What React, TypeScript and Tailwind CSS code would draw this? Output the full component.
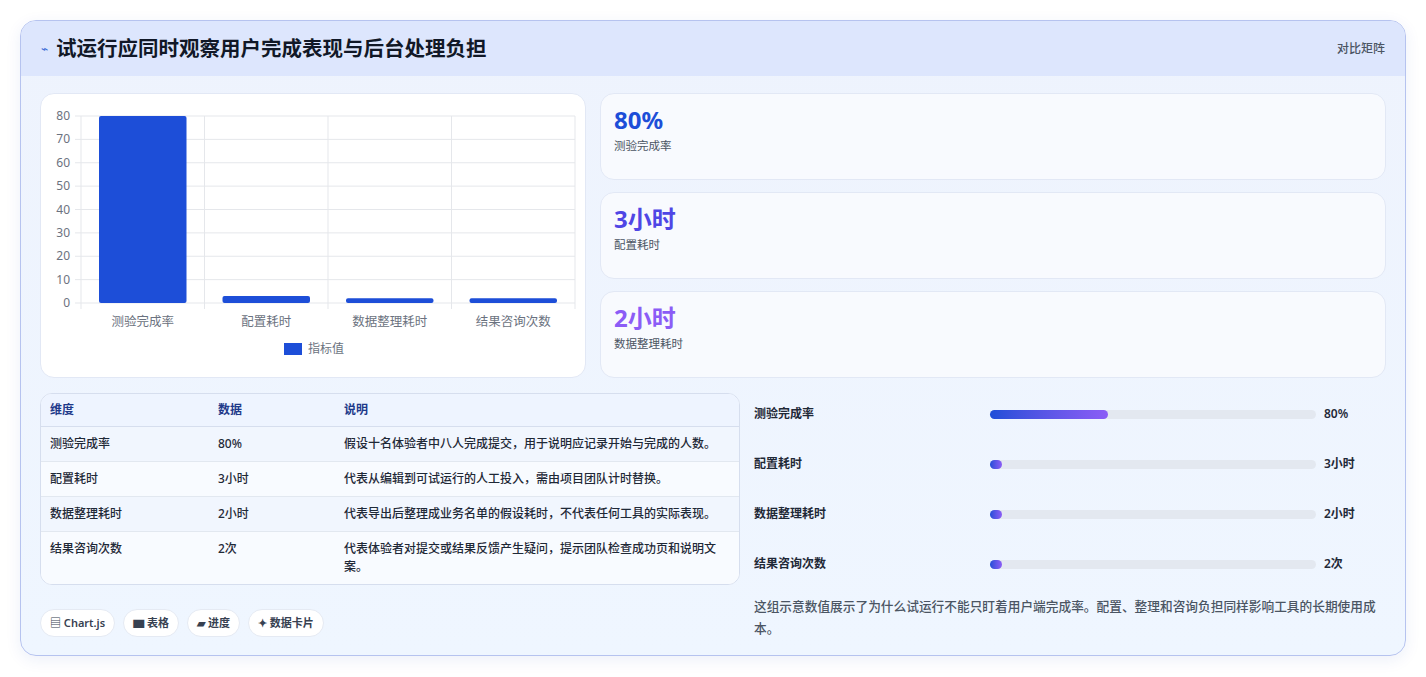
import React from "react";

const font = { fontFamily: '"Noto Sans", "Noto Sans CJK SC", sans-serif' };

function Chart() {
  const x0 = 40, x1 = 534, yTop = 22, yBot = 209;
  const h = (v: number) => ((yBot - yTop) * v) / 80;
  const cats = ["测验完成率", "配置耗时", "数据整理耗时", "结果咨询次数"];
  const vals = [80, 3, 2, 2];
  const cw = (x1 - x0) / 4;
  return (
    <svg width="545" height="284" viewBox="0 0 545 284" style={{ fontFamily: '"Noto Sans","Noto Sans CJK SC",sans-serif' }}>
      {[0, 10, 20, 30, 40, 50, 60, 70, 80].map((v) => {
        const y = yBot - h(v);
        return (
          <g key={v}>
            <line x1={x0 - 6} x2={x1} y1={y} y2={y} stroke="#e5e7eb" />
            <text x={29} y={y + 4} fontSize="12" fill="#6b7280" textAnchor="end">{v}</text>
          </g>
        );
      })}
      {[0, 1, 2, 3, 4].map((i) => (
        <line key={i} x1={x0 + cw * i} x2={x0 + cw * i} y1={yTop} y2={yBot + 6} stroke="#e5e7eb" />
      ))}
      {vals.map((v, i) => (
        <rect key={i} x={x0 + cw * i + 18} y={yBot - h(v)} width={cw - 36} height={h(v)} fill="#1d4ed8" rx="2" />
      ))}
      {cats.map((c, i) => (
        <text key={c} x={x0 + cw * i + cw / 2} y={232} fontSize="12.5" fill="#6b7280" textAnchor="middle">{c}</text>
      ))}
      <rect x={243} y={249} width={18} height={12} fill="#1d4ed8" />
      <text x={267} y={259} fontSize="12" fill="#6b7280">指标值</text>
    </svg>
  );
}

const stats = [
  { v: "80%", l: "测验完成率", c: "text-[#1d4ed8]" },
  { v: "3小时", l: "配置耗时", c: "text-[#4f46e5]" },
  { v: "2小时", l: "数据整理耗时", c: "text-[#8b5cf6]" },
];

const rows = [
  ["测验完成率", "80%", "假设十名体验者中八人完成提交，用于说明应记录开始与完成的人数。"],
  ["配置耗时", "3小时", "代表从编辑到可试运行的人工投入，需由项目团队计时替换。"],
  ["数据整理耗时", "2小时", "代表导出后整理成业务名单的假设耗时，不代表任何工具的实际表现。"],
  ["结果咨询次数", "2次", "代表体验者对提交或结果反馈产生疑问，提示团队检查成功页和说明文案。"],
];

const prog = [
  ["测验完成率", "80%", 118],
  ["配置耗时", "3小时", 12],
  ["数据整理耗时", "2小时", 12],
  ["结果咨询次数", "2次", 12],
] as const;

export default function App() {
  return (
    <div className="w-[1426px] h-[677px] bg-white pt-[20px] px-[20px]" style={font}>
      <div className="w-[1386px] h-[636px] rounded-[16px] border border-[#b6c3ef] overflow-hidden bg-gradient-to-b from-[#eef3fd] to-[#eff6ff] shadow-[0_4px_16px_rgba(30,64,175,0.08)]">
        <div className="h-[55px] bg-[#dde6fd] flex items-center justify-between px-[20px]">
          <div className="flex items-center gap-[8px]">
            <span className="text-[#3b6bd6] text-[12px]">⌁</span>
            <span className="text-[20.5px] font-bold text-[#111827]">试运行应同时观察用户完成表现与后台处理负担</span>
          </div>
          <span className="text-[12px] text-[#4b5563] font-medium">对比矩阵</span>
        </div>
        <div className="px-[19px] pt-[17px]">
          <div className="flex gap-[14px]">
            <div className="w-[546px] h-[285px] bg-white rounded-[14px] border border-[#e2e8f5]">
              <Chart />
            </div>
            <div className="flex-1 flex flex-col gap-[12px]">
              {stats.map((s) => (
                <div key={s.l} className="h-[87px] rounded-[14px] border border-[#e2e8f5] bg-[#f8fafe] px-[13px] pt-[10px]">
                  <div className={`text-[24px] font-bold leading-[32px] ${s.c}`}>{s.v}</div>
                  <div className="text-[11.5px] text-[#4b5563] mt-[1px]">{s.l}</div>
                </div>
              ))}
            </div>
          </div>
          <div className="flex gap-[14px] mt-[15px]">
            <div className="w-[700px]">
              <div className="rounded-[12px] border border-[#d6deee] overflow-hidden bg-white">
                <div className="flex h-[33px] items-center bg-[#eef4ff] border-b border-[#d6deee] text-[12px] font-semibold text-[#1e3a8a]">
                  <div className="w-[177px] pl-[9px]">维度</div>
                  <div className="w-[126px]">数据</div>
                  <div className="flex-1">说明</div>
                </div>
                {rows.map((r, i) => (
                  <div key={r[0]} className={`flex py-[8px] text-[12px] font-medium text-[#1f2937] leading-[18px] ${i % 2 ? "bg-[#f8fbff]" : "bg-[#f1f6fe]"} ${i < 3 ? "border-b border-[#e2e8f0]" : ""}`}>
                    <div className="w-[177px] pl-[9px]">{r[0]}</div>
                    <div className="w-[126px]">{r[1]}</div>
                    <div className="flex-1 pr-[16px]">{r[2]}</div>
                  </div>
                ))}
              </div>
              <div className="flex gap-[8px] mt-[24px]">
                {["▤ Chart.js", "▆ 表格", "▰ 进度", "✦ 数据卡片"].map((t) => (
                  <span key={t} className="h-[28px] px-[9px] rounded-full bg-white border border-[#e5eaf3] text-[11px] font-semibold text-[#374151] flex items-center">{t}</span>
                ))}
              </div>
            </div>
            <div className="flex-1 -mt-[4px]">
              {prog.map(([l, v, w]) => (
                <div key={l} className="h-[50px] flex items-center text-[12px] font-semibold text-[#1f2937]">
                  <div className="w-[236px]">{l}</div>
                  <div className="w-[326px] h-[9px] rounded-full bg-[#e3e8f0]">
                    <div className="h-[9px] rounded-full bg-gradient-to-r from-[#1d4ed8] to-[#8b5cf6]" style={{ width: w }} />
                  </div>
                  <div className="pl-[8px]">{v}</div>
                </div>
              ))}
              <p className="mt-[6px] text-[12.7px] font-medium leading-[22px] text-[#4b5563] pr-[4px]">
                这组示意数值展示了为什么试运行不能只盯着用户端完成率。配置、整理和咨询负担同样影响工具的长期使用成本。
              </p>
            </div>
          </div>
        </div>
      </div>
    </div>
  );
}
